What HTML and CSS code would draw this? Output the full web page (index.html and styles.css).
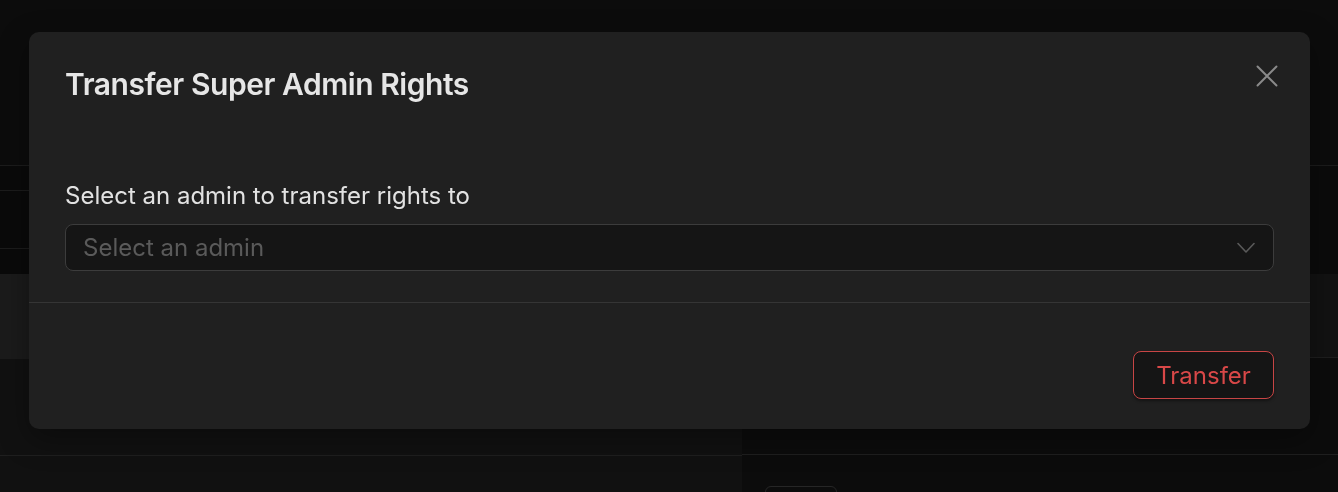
FILE: index.html
```html
<!DOCTYPE html>
<html lang="en">
<head>
<meta charset="utf-8">
<title>Transfer Super Admin Rights</title>
<link rel="stylesheet" href="styles.css">
</head>
<body>
<div class="page">
  <div class="col col-left">
    <div class="head"></div>
    <div class="row r1"></div>
    <div class="row r2"></div>
    <div class="row r3"></div>
    <div class="band band-left"></div>
    <div class="rest rest-left"></div>
  </div>
  <div class="col col-right">
    <div class="head"></div>
    <div class="row r4"></div>
    <div class="band band-right"></div>
    <div class="rest rest-right"><div class="ghost-btn"></div></div>
  </div>
</div>

<div class="overlay">
  <div class="modal" role="dialog" aria-labelledby="mtitle">
    <div class="modal-header">
      <h2 id="mtitle" class="modal-title">Transfer Super Admin Rights</h2>
      <button class="close-btn" aria-label="Close">
        <svg width="22" height="22" viewBox="0 0 22 22" fill="none" stroke="currentColor" stroke-width="2" stroke-linecap="round">
          <path d="M1.5 1.5 L20.5 20.5 M20.5 1.5 L1.5 20.5"/>
        </svg>
      </button>
    </div>
    <div class="modal-body">
      <label class="field-label">Select an admin to transfer rights to</label>
      <div class="select">
        <span class="placeholder">Select an admin</span>
        <svg class="chev" width="18" height="12" viewBox="0 0 18 12" fill="none" stroke="currentColor" stroke-width="1.6" stroke-linecap="round" stroke-linejoin="round">
          <path d="M1 1.5 L9 10 L17 1.5"/>
        </svg>
      </div>
    </div>
    <div class="modal-footer">
      <button class="transfer-btn">Transfer</button>
    </div>
  </div>
</div>
</body>
</html>
```
FILE: styles.css
```css
* { box-sizing: border-box; }
html, body { margin: 0; padding: 0; height: 100%; }
body {
  background: #0b0b0b;
  font-family: Inter, "Noto Sans", "Liberation Sans", sans-serif;
  overflow: hidden;
}
.page {
  display: grid;
  grid-template-columns: 742px 1fr;
  height: 492px;
}
.col { display: flex; flex-direction: column; }
.head { height: 166px; background: #0c0c0c; border-bottom: 1px solid #1c1c1c; flex: none; }
.row { flex: none; border-bottom: 1px solid #1c1c1c; background: #0a0a0a; }
.r1 { height: 25px; }
.r2 { height: 58px; }
.r3 { height: 25px; border-bottom: none; }
.band-left { height: 85px; background: #1b1b1b; flex: none; }
.rest-left { flex: 1; background: #111111; }
.rest-left::before { content: ""; display: block; height: 96px; border-bottom: 1px solid #1f1f1f; }
.r4 { height: 108px; border-bottom: none; background: #0b0b0b; }
.band-right { height: 84px; background: #121212; border-bottom: 1px solid #1e1e1e; flex: none; }
.rest-right { flex: 1; background: #0c0c0c; position: relative; }
.rest-right::before { content: ""; display: block; height: 96px; border-bottom: 1px solid #1f1f1f; }
.ghost-btn {
  margin: 31px 0 0 23px;
  width: 72px; height: 20px;
  border: 1px solid #262626;
  border-radius: 6px;
}

.overlay {
  position: fixed;
  inset: 0;
  padding: 32px 28px 0 29px;
}
.modal {
  background: #202020;
  border-radius: 10px;
  box-shadow: 0 10px 30px rgba(0,0,0,0.35);
  height: 397px;
  display: flex;
  flex-direction: column;
}
.modal-header {
  display: flex;
  justify-content: space-between;
  align-items: flex-start;
  padding: 34px 32px 0 36px;
}
.modal-title {
  margin: 0;
  font-size: 30px;
  line-height: 36px;
  font-weight: 600;
  color: #e6e6e6;
  letter-spacing: -0.45px;
}
.close-btn {
  background: none;
  border: none;
  padding: 0;
  margin-top: -1px;
  color: #8a8a8a;
  width: 22px; height: 22px;
  display: flex;
}
.modal-body {
  padding: 80px 36px 31px 36px;
  border-bottom: 1px solid #353535;
}
.field-label {
  display: block;
  font-size: 24px;
  line-height: 28px;
  color: #e2e2e2;
  margin-bottom: 14px;
}
.select {
  height: 47px;
  background: #151515;
  border: 1px solid #3c3c3c;
  border-radius: 8px;
  display: flex;
  align-items: center;
  justify-content: space-between;
  padding: 0 18px 0 17px;
}
.placeholder {
  font-size: 24px;
  color: #5a5a5a;
}
.chev { color: #5a5a5a; }
.modal-footer {
  display: flex;
  justify-content: flex-end;
  padding: 48px 36px 0 36px;
}
.transfer-btn {
  font-family: inherit;
  font-size: 24px;
  color: #d94848;
  background: #151515;
  border: 1px solid #c74545;
  border-radius: 8px;
  height: 48px;
  width: 141px;
  box-shadow: 0 2px 3px rgba(0,0,0,0.4);
}
```
